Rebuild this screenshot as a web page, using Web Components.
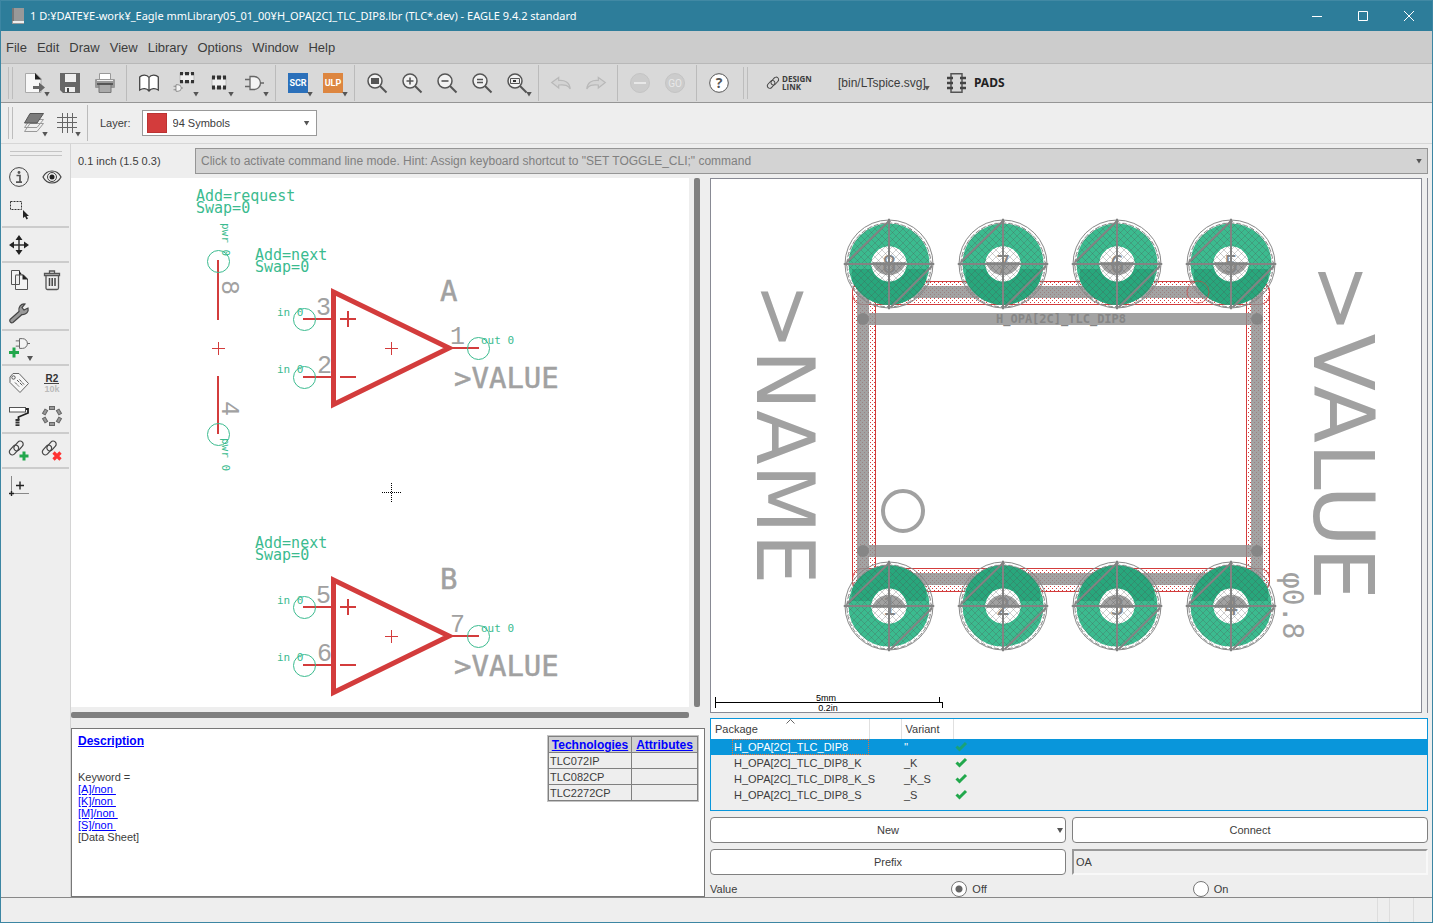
<!DOCTYPE html>
<html lang="en">
<head>
<meta charset="utf-8">
<meta name="viewport" content="width=device-width, initial-scale=1">
<title>EAGLE 9.4.2 standard</title>
<style>
html, body { margin: 0; height: 100%; }
body { background: #eee; color: #3c3c3c; font: 11px/16px "Liberation Sans", "Noto Sans CJK JP", sans-serif; }
</style>
</head>
<body>
<app-window></app-window>
<script>
const base = '*{box-sizing:border-box}button,input,select{font:inherit;color:inherit;margin:0}button{border:0;background:none;padding:0}';
const define = (name, css, html) => {
  const t = document.createElement('template');
  const build = typeof html === 'function';
  if (!build) t.innerHTML = `<style>${base}${css}</style>${html}`;
  customElements.define(name, class extends HTMLElement {
    constructor() { super(); this.attachShadow({ mode: 'open' }); if (!build) this.shadowRoot.append(t.content.cloneNode(true)); }
    connectedCallback() { if (build) this.shadowRoot.innerHTML = `<style>${base}${css}</style>${html(this)}`; }
  });
};

const lens = inner => `<path d="M13 13l6.500 6.500" stroke="#555" stroke-width="2"/><circle cx="8" cy="8" r="7" fill="#fff" fill-opacity=".65" stroke="#555" stroke-width="1.500"/>${inner}`;
const gate = `<path d="M6 3.500h4a6.500 6.500 0 0 1 0 13H6zM16.500 10H20M1 6.500h5M1 13.500h5" fill="#f4f4f4" stroke="#666" stroke-width="1.300"/>`;
const chip = `<rect x="3" y="4" width="14" height="11" fill="#eee" stroke="#bbb"/><path d="M3 4.500h3m2 0h4m2 0h3M3 14.500h3m2 0h4m2 0h3" stroke="#333" stroke-width="4"/>`;
const chain = `<g fill="none" stroke="#444" stroke-width="1.200"><rect x="-3" y="-5.500" width="6" height="11" rx="3" transform="translate(9.500 5) rotate(42)"/><rect x="-3" y="-5.500" width="6" height="11" rx="3" transform="translate(5 9) rotate(42)"/></g>`;
const tag = (t, c) => `<rect width="20" height="20" fill="${c}"/><text x="10" y="13" font-family="Roboto" font-weight="700" font-size="9" fill="#fff" text-anchor="middle">${t}</text>`;
const icons = {
  export: `<path d="M.500 .500H11l5 5V19.500H.500z" fill="#f8f8f8" stroke="#aaa"/><path d="M10 0l6.500 6.500H10z" fill="#222"/><path d="M8 13h6V9.500l6 5-6 5V16H8z" fill="#666"/>`,
  save: `<path d="M0 0h20v20H3l-3-3z" fill="#666"/><path d="M5 1h11v8H5zM5 14h10v5H5z" fill="#eee"/><path d="M7 15h2v4H7z" fill="#444"/>`,
  print: `<path d="M4.500 .500h11V7h-11z" fill="#fff" stroke="#999"/><rect y="6" width="20" height="9" rx="1" fill="#999"/><path d="M2 7.500h16" stroke="#eee"/><path d="M4 11h12v8.500H4z" fill="#aaa" stroke="#777"/><path d="M2 11h16" stroke="#444" stroke-width="1.500"/>`,
  book: `<path d="M10 4.500C8 1.500 3 1.500 .700 4v13c3-2 7-2 9.300 1 2.300-3 6.300-3 9.300-1V4C17 1.500 12 1.500 10 4.500zM10 4.500V18" fill="#fff" stroke="#444" stroke-width="1.300"/>`,
  device: `<g transform="translate(3 -3) scale(1 .800)">${chip}</g><g transform="translate(-1 10) scale(.500)">${gate}</g>`,
  chip, gate,
  scr: tag('SCR', '#2b70ba'), ulp: tag('ULP', '#dd8640'),
  zoomfit: lens('<path d="M4 5h8v6H4z" fill="#555"/>'),
  zoomin: lens('<path d="M4.500 8h7M8 4.500v7" stroke="#555" stroke-width="1.600"/>'),
  zoomout: lens('<path d="M4.500 8h7" stroke="#555" stroke-width="1.600"/>'),
  zoomredraw: lens('<path d="M5 6.500h6M5 9.500h6" stroke="#555" stroke-width="1.500"/>'),
  zoomselect: lens('<path d="M3.500 5.500h9v5h-9z" fill="#eee" stroke="#555"/><path d="M6 7h3v2H6z" fill="#333"/>'),
  undo: `<path d="M.700 9.500l7-5v3c6-.500 11 1.500 11.500 8.500-2-4-5-4.500-11.500-4v3z" fill="#d4d4d4" stroke="#b9b9b9" stroke-width="1.200"/>`,
  redo: `<path d="M19.300 9.500l-7-5v3C6.300 7 1.300 9 .800 16c2-4 5-4.500 11.500-4v3z" fill="#d4d4d4" stroke="#b9b9b9" stroke-width="1.200"/>`,
  stop: `<circle cx="10" cy="10" r="9.500" fill="#ccc" stroke="#c4c4c4"/><path d="M4 10h12" stroke="#e8e8e8" stroke-width="2"/>`,
  go: `<circle cx="10" cy="10" r="9.500" fill="#ccc" stroke="#c4c4c4"/><text x="10" y="14" font-family="Roboto" font-size="10" fill="#e8e8e8" text-anchor="middle">GO</text>`,
  help: `<circle cx="10" cy="10" r="9.300" fill="#fff" stroke="#555"/><text x="10" y="15" font-family="Open Sans" font-weight="700" font-size="14" fill="#555" text-anchor="middle">?</text>`,
  link: `<g transform="translate(-1 1) scale(.820)">${chain}</g>`,
  pads: `<path d="M4 .750h11v18.500H4z" fill="none" stroke="#555" stroke-width="1.500"/><path d="M0 5h6M0 10h6M0 15h6M13 5h6M13 10h6M13 15h6" stroke="#444" stroke-width="2.500"/>`,
  layers: `<path d="M6 10.500h13.500L13 18.500H.500zM6 6.500h13.500L13 14.500H.500z" fill="#eee" stroke="#999"/><path d="M6 .500h13.500L13 10H.500z" fill="#7b7b7b" stroke="#555"/>`,
  grid: `<path d="M5.500 0v20M10.500 0v20M15.500 0v20M0 4.500h20M0 9.500h20M0 14.500h20" stroke="#666"/>`,
  info: `<circle cx="10" cy="10" r="9.400" fill="none" stroke="#444"/><path d="M7.500 8.500h3.500V15M7 15.200h6" fill="none" stroke="#555" stroke-width="1.700"/><circle cx="10" cy="5.500" r="1.400" fill="#555"/>`,
  eye: `<path d="M1 10c4-8 14-8 18 0-4 8-14 8-18 0z" fill="none" stroke="#444" stroke-width="1.200"/><circle cx="10" cy="10" r="4.500" fill="none" stroke="#444"/><circle cx="10" cy="10" r="2.500" fill="#222"/>`,
  select: `<path d="M1.500 1.500h11v8h-11z" fill="none" stroke="#333" stroke-dasharray="2 1"/><path d="M14 10v8l2-1.500 1.500 3 1.500-1-1.500-2.500H20z" fill="#222"/>`,
  move: `<path d="M10 3v14M3 10h14" stroke="#333" stroke-width="1.500"/><path d="M10 0l3.500 5h-7zM10 20l3.500-5h-7zM0 10l5-3.500v7zM20 10l-5-3.500v7z" fill="#222"/>`,
  copy: `<path d="M2.500 .500h8v14h-8zM6.500 5.500v14h12V9l-4-4H6.500z" fill="#f4f4f4" stroke="#555"/><path d="M10 .500l3 4h-3zM13.500 4l5.500 5.500h-5.500z" fill="#222"/>`,
  trash: `<path d="M4 5.500h12.500V18a1.500 1.500 0 0 1-1.500 1.500H5.500A1.500 1.500 0 0 1 4 18zM2.500 3.500h15v2h-15zM7.500 3V1h5v2" fill="none" stroke="#555" stroke-width="1.300"/><path d="M7.500 8v8M10.200 8v8M13 8v8" stroke="#444" stroke-width="1.500"/>`,
  wrench: `<path d="M1 16.500L10 8.500C9 4 12 .500 16 1l-3 3.500 2 2.500 4-2c1 4-2 7-6 6.500L4 19.500c-2 1-4-1-3-3z" fill="#999" stroke="#444" stroke-width="1.200"/>`,
  add: `<g transform="translate(6 -2) scale(.750)">${gate}</g><path d="M5 9.500v10M0 14.500h10" stroke="#22a84c" stroke-width="3"/>`,
  name: `<path d="M1 4l3-3.500h6L19.500 10.500 11 19.500 1 9.500z" fill="#f6f6f6" stroke="#666"/><circle cx="4.500" cy="4.500" r="1.700" fill="none" stroke="#555"/><path d="M6 9.500l4 4M8 7l6 6M10.500 6.500l4.500 5" stroke="#555" stroke-dasharray="3 1"/>`,
  value: `<text x="10" y="9" font-family="Liberation Sans" font-weight="700" font-size="10" fill="#333" text-anchor="middle">R2</text><path d="M2 10.500h15" stroke="#444"/><text x="10" y="19" font-family="Liberation Sans" font-weight="700" font-size="9" fill="#bbb" text-anchor="middle">10k</text>`,
  paint: `<rect x=".500" y="1.500" width="16" height="4.500" fill="#fff" stroke="#555"/><path d="M17 3h2v4l-9.500 4v3" fill="none" stroke="#222" stroke-width="1.800"/><path d="M8.500 13v7" stroke="#333" stroke-width="4" stroke-dasharray="2 .600"/>`,
  ring: `<g fill="#999" stroke="#666">${[0, 60, 120, 180, 240, 300].map(a => `<rect x="7.500" y=".500" width="5" height="3" transform="rotate(${a} 10 10)"/>`).join('')}</g>`,
  connect: `${chain}<path d="M15 10.500v9M10.500 15h9" stroke="#22a84c" stroke-width="3"/>`,
  disconnect: `${chain}<path d="M11.500 11.500l7 7M18.500 11.500l-7 7" stroke="#f33" stroke-width="3.200"/>`,
  mark: `<path d="M2.500 0v17M2.500 17.500H20" stroke="#888"/><path d="M0 17.500h5M2.500 15v5M7 9.500h8M11 5.500v8" stroke="#222" stroke-width="1.400"/>`,
  check: `<path d="M1.500 5.500l3 3L11 2" fill="none" stroke="#22a84c" stroke-width="3"/>`
};

define('ui-icon', ':host{display:block;width:20px;height:20px}:host([name=check]){width:12px;height:12px}:host([name=link]){width:12px;height:14px}svg{display:block;width:100%;height:100%;overflow:visible}',
  el => { const n = el.getAttribute('name'); const vb = n === 'check' ? '0 0 12 12' : n === 'link' ? '0 0 12 14' : '0 0 20 20'; return `<svg viewBox="${vb}" aria-hidden="true">${icons[n]}</svg>`; });

define('drop-caret', ':host{display:block;width:6px;height:5px;background:#555;clip-path:polygon(0 0,100% 0,50% 100%)}', '');

define('tool-button', ':host{display:block;width:35px;height:33px}button{position:relative;display:grid;place-items:center;width:100%;height:100%}drop-caret{position:absolute;right:2px;bottom:3px}',
  el => `<button type="button" aria-label="${el.getAttribute('label')}" ${el.hasAttribute('disabled') ? 'disabled' : ''}><ui-icon name="${el.getAttribute('icon')}"></ui-icon>${el.hasAttribute('menu') ? '<drop-caret></drop-caret>' : ''}</button>`);
define('tool-sep', ':host{display:block;width:9px;height:36px;padding-left:4px}div{width:1px;height:100%;background:#bbb}', '<div></div>');
define('tool-grip', ':host{display:block;width:16px;height:32px;padding-left:7px}div{width:5px;height:100%;border:solid #bdbdbd;border-width:0 1px}', '<div></div>');

define('title-bar', `:host{display:flex;align-items:center;height:31px;background:#2d7d9a;border-top:1px solid #4189a4;color:#fff;font:11px/16px "Noto Sans","Noto Sans CJK JP",sans-serif;padding-left:11px}
svg{display:block}.name{flex:1;margin-left:6px;white-space:nowrap;overflow:hidden}button{width:46px;height:30px;display:grid;place-items:center}`,
`<svg width="12" height="16"><path d="M0 0h12v16H0z" fill="#999"/><path d="M0 0h2v13H0z" fill="#777"/><path d="M1 13h11v2H1z" fill="#eee"/></svg>
<div class="name">1 D:¥DATE¥E-work¥_Eagle mmLibrary05_01_00¥H_OPA[2C]_TLC_DIP8.lbr (TLC*.dev) - EAGLE 9.4.2 standard</div>
<button aria-label="Minimize"><svg width="10" height="10"><path d="M0 5.500h10" stroke="#fff"/></svg></button>
<button aria-label="Maximize"><svg width="10" height="10"><path d="M.500 .500h9v9h-9z" fill="none" stroke="#fff"/></svg></button>
<button aria-label="Close"><svg width="10" height="10"><path d="M0 0l10 10M10 0L0 10" stroke="#fff"/></svg></button>`);

define('menu-bar', ':host{display:flex;gap:10px;align-items:center;height:33px;padding:1px 0 0 5px;background:#ccc;border-bottom:1px solid #b8b8b8;font-size:13px}',
  ['File', 'Edit', 'Draw', 'View', 'Library', 'Options', 'Window', 'Help'].map(m => `<button type="button">${m}</button>`).join(''));

const tb = (icon, label, extra = '') => `<tool-button icon="${icon}" label="${label}" ${extra}></tool-button>`;
define('action-bar', `:host{display:flex;align-items:center;height:39px;background:#d9d9d9;border-bottom:1px solid #959595}
.wide{display:flex;align-items:center;height:33px;white-space:nowrap;font-size:12px;position:relative}.dl{margin-left:16px;gap:2px;width:56px;font:700 8px/8px "Open Sans",sans-serif;text-align:left}
.lt{margin-left:14px;width:92px}.lt drop-caret{position:absolute;right:0;bottom:9px}.pads{margin-left:17px;gap:7px;font:700 12px/16px "Noto Sans",sans-serif;color:#222}`,
`<tool-grip></tool-grip>${tb('export', 'Export', 'menu')}${tb('save', 'Save')}${tb('print', 'Print')}<tool-sep></tool-sep>
${tb('book', 'Table of contents')}${tb('device', 'Device', 'menu')}${tb('chip', 'Footprint', 'menu')}${tb('gate', 'Symbol', 'menu')}<tool-sep></tool-sep>
${tb('scr', 'Script', 'menu')}${tb('ulp', 'Run ULP', 'menu')}<tool-sep></tool-sep>
${tb('zoomfit', 'Fit')}${tb('zoomin', 'Zoom in')}${tb('zoomout', 'Zoom out')}${tb('zoomredraw', 'Redraw')}${tb('zoomselect', 'Zoom select', 'menu')}<tool-sep></tool-sep>
${tb('undo', 'Undo', 'disabled')}${tb('redo', 'Redo', 'disabled')}<tool-sep></tool-sep>${tb('stop', 'Stop', 'disabled')}${tb('go', 'Go', 'disabled')}<tool-sep></tool-sep>${tb('help', 'Help')}
<tool-grip></tool-grip><button class="wide dl"><ui-icon name="link"></ui-icon><span>DESIGN<br>LINK</span></button>
<button class="wide lt">[bin/LTspice.svg]<drop-caret></drop-caret></button><button class="wide pads"><ui-icon name="pads"></ui-icon>PADS</button>`);

define('layer-bar', `:host{display:flex;align-items:center;height:41px;border-bottom:1px solid #d6d6d6}tool-button{width:33px}label{margin:0 11px 0 8px}
.pick{display:grid;grid-template-columns:4px 20px 1fr 12px;align-items:center;width:175px;height:26px;border:1px solid #999;background:#fff}.sw{grid-area:1/2;height:20px;background:#d33c3c;border:1px solid #b33}
select{grid-area:1/3/2/5;appearance:none;border:0;background:none;padding:0 0 0 6px;height:24px}drop-caret{grid-area:1/4;pointer-events:none}`,
`<tool-grip></tool-grip>${tb('layers', 'Layer settings', 'menu')}${tb('grid', 'Grid', 'menu')}<tool-sep></tool-sep><label for="layer">Layer:</label>
<div class="pick"><span class="sw"></span><select id="layer"><option>94 Symbols</option></select><drop-caret></drop-caret></div>`);

const none = '<span></span>';
define('side-palette', `:host{display:block;width:70px;border-right:1px solid #d4d4d4;padding:7px 1px 0 1px}.grip{height:5px;margin:0 7px 4px 8px;border:solid #c4c4c4;border-width:1px 0}
.group{display:grid;grid-template-columns:33px 33px;border-bottom:2px solid #ccc}.group:last-child{border:0}tool-button{width:33px}`,
`<div class="grip"></div><div class="group">${tb('info', 'Info')}${tb('eye', 'Show')}${tb('select', 'Group')}${none}</div>
<div class="group">${tb('move', 'Move')}</div><div class="group">${tb('copy', 'Copy')}${tb('trash', 'Delete')}${tb('wrench', 'Change')}</div>
<div class="group">${tb('add', 'Add', 'menu')}</div><div class="group">${tb('name', 'Name')}${tb('value', 'Value')}${tb('paint', 'Paint')}${tb('ring', 'Pin array')}</div>
<div class="group">${tb('connect', 'Connect')}${tb('disconnect', 'Disconnect')}</div><div class="group">${tb('mark', 'Mark')}</div>`);

define('command-row', `:host{display:grid;grid-template-columns:117px 1fr;align-items:center;height:34px;padding:0 4px 0 7px}
.box{display:flex;align-items:center;height:26px;border:1px solid #959595;background:#d3d3d3;padding:0 5px}input{flex:1;min-width:0;border:0;padding:0;background:none;font-size:12px;outline:0}input::placeholder{color:#808080;opacity:1}`,
`<span>0.1 inch (1.5 0.3)</span><div class="box"><input aria-label="Command line" placeholder="Click to activate command line mode. Hint: Assign keyboard shortcut to &quot;SET TOGGLE_CLI;&quot; command"><drop-caret></drop-caret></div>`);

const opamp = (dy, letter, plus, minus, out) => `<g transform="translate(0 ${dy})">
<g class="note"><text x="255" y="260">Add=next</text><text x="255" y="272">Swap=0</text></g>
<g class="pin"><text x="277" y="316">in 0</text><text x="277" y="373">in 0</text><text x="481" y="344">out 0</text></g>
<g class="num"><text x="316" y="315">${plus}</text><text x="317" y="373">${minus}</text><text x="450" y="344">${out}</text></g>
<g class="val"><text x="440" y="301">${letter}</text><text x="454" y="388">&gt;VALUE</text></g>
<path class="wire" d="M303 319h28M303 377h28M450 348h29M340 319h16M348 311v16M340 377h16"/>
<path d="M333.500 292L449 348 333.500 404.500z" fill="none" stroke="#d33c3c" stroke-width="5"/>
<path class="thin" d="M385 348.500h13M391.500 342v13"/>
<g class="ring"><circle cx="304.500" cy="319.500" r="11"/><circle cx="304.500" cy="377.500" r="11"/><circle cx="478.500" cy="348.500" r="11"/></g></g>`;
define('symbol-view', `:host{display:grid;grid-template:minmax(0,1fr) 21px/minmax(0,1fr) 16px;min-height:0}svg{display:block;width:100%;height:100%;background:#fff}
text{font-family:"DejaVu Sans Mono",monospace}.note text{font-size:15px;fill:#3bbb8f}.pin text{font-size:11px;fill:#3bbb8f}.num text{font:25px "Liberation Mono",monospace;fill:#a1a1a1}.val text{font-size:29px;fill:#a1a1a1;stroke:#a1a1a1;stroke-width:.5px}
.wire{stroke:#d33c3c;stroke-width:2}.thin{stroke:#d33c3c}.ring circle{fill:none;stroke:#3bbb8f}.v{width:6px;margin-left:5px;background:#808080;border-radius:2px}.h{height:6px;margin-top:5px;background:#808080;border-radius:2px}`,
`<svg viewBox="71 178 618 529" role="img" aria-label="Device symbols">
<g class="note"><text x="196" y="201">Add=request</text><text x="196" y="213">Swap=0</text></g>
<g class="pin"><text transform="translate(222 223) rotate(90)">pwr 0</text><text transform="translate(222 438) rotate(90)">pwr 0</text></g>
<g class="num"><text transform="translate(222 280) rotate(90)">8</text><text transform="translate(222 401) rotate(90)">4</text></g>
<path class="wire" d="M218 260v60M218 376v58"/><path class="thin" d="M212 348.500h13M218.500 342v13"/>
<g class="ring"><circle cx="218.500" cy="261.500" r="11"/><circle cx="218.500" cy="434.500" r="11"/></g>
${opamp(0, 'A', 3, 2, 1)}${opamp(288, 'B', 5, 6, 7)}
<path d="M382 492.500h19M391.500 483v19" stroke="#000" stroke-dasharray="1 1"/></svg>
<div class="v"></div><div class="h"></div>`);

define('description-panel', `:host{display:flex;justify-content:space-between;height:169px;background:#fff;border:1px solid #777;padding:6px 6px 0;line-height:12px}
a{color:#00f}.t,th{font-weight:700;font-size:12px;line-height:13px}.text{white-space:pre}.lines{margin-top:23px}
table{border-collapse:collapse;table-layout:fixed;width:150px;align-self:flex-start;margin-top:1px;outline:1px solid #c4c4c4;background:#eee}th,td{border:1px solid #808080;height:16px;padding:0 1px;text-align:left;line-height:14px}th{background:#d0d0d0;text-align:center;padding:0}`,
`<div class="text"><a class="t" href="#description">Description</a><div class="lines">Keyword =
<a href="#a">[A]/non </a>
<a href="#k">[K]/non </a>
<a href="#m">[M]/non </a>
<a href="#s">[S]/non </a>
[Data Sheet]</div></div>
<table><colgroup><col style="width:83px"><col></colgroup><tr><th><a href="#tech">Technologies</a></th><th><a href="#attr">Attributes</a></th></tr><tr><td>TLC072IP</td><td></td></tr><tr><td>TLC082CP</td><td></td></tr><tr><td>TLC2272CP</td><td></td></tr></table>`);

const pad = (x, y, n, up) => `<g transform="translate(${x} ${y})"><circle r="29" fill="none" stroke="#3bbb8f" stroke-width="23"/>
<path d="${up ? 'M-37 5H37V17A40.500 40.500 0 0 1-37 17z' : 'M-37-5H37V-17A40.500 40.500 0 0 0-37-17z'}" fill="#28a77c"/><circle r="17.500" fill="#fff"/>
<path d="${up ? 'M-17-2H17A17.500 17.500 0 0 1-17-2z' : 'M-17 2H17A17.500 17.500 0 0 0-17 2z'}" fill="#a1a1a1"/>
<circle r="42" fill="url(#hatch)"/><circle r="44" fill="none" stroke="#888"/><circle r="42" cy="1" fill="none" stroke="#888" stroke-dasharray="5 2"/>
<path d="M-45 0H45M0-45V45M-42-2L0-43M43 2L2 43" stroke="#838383" stroke-width="2"/><path d="M0-46l2 4h-4zM-46 0l4-2v4zM46 0l-4-2v4zM0 46l2-4h-4z" fill="#838383"/>
<text x="-7" y="9" font-size="24" fill="#858585">${n}</text></g>`;
const strips = f => `<g ${f}><rect x="852.500" y="281.500" width="23" height="310" rx="10"/><rect x="1246.500" y="281.500" width="23" height="310" rx="10"/><rect x="852.500" y="281.500" width="417" height="23" rx="10"/><rect x="852.500" y="568.500" width="417" height="23" rx="10"/></g>`;
define('package-view', `:host{display:grid;grid-template:minmax(0,1fr)/minmax(0,1fr);padding-right:5px;border-right:1px solid #888a94;min-height:0}svg{display:block;width:100%;height:100%;background:#fff;border:1px solid #888a94}
text{font-family:"DejaVu Sans Mono",monospace}.big{font:80px "DejaVu Sans",sans-serif;fill:#a1a1a1}.big.value{font-size:84px}.scale{font:9px "Liberation Sans",sans-serif;text-anchor:middle}`,
`<svg viewBox="711 179 710 533" role="img" aria-label="Package footprint"><defs>
<pattern id="hatch" width="7" height="7" patternUnits="userSpaceOnUse"><path d="M-1-1l9 9M8-1L-1 8" stroke="#505050" stroke-opacity=".35" stroke-width=".800"/></pattern>
<pattern id="dots" width="4" height="4" patternUnits="userSpaceOnUse"><path d="M0 .500h1M2 2.500h1" stroke="#d33c3c"/></pattern></defs>
${strips('fill="url(#dots)"')}${strips('fill="none" stroke="#d33c3c"')}
<g stroke="#8f8f8f" stroke-width="12" opacity=".820"><path d="M863 292V579M1257 292V579M863 292H1257M863 579H1257" stroke-linecap="round"/><path d="M857 319H1263M857 551H1263"/></g>
<g fill="#868686"><circle cx="863" cy="319" r="6"/><circle cx="1257" cy="319" r="6"/><circle cx="863" cy="551" r="6"/><circle cx="1257" cy="551" r="6"/></g>
<circle cx="903" cy="511" r="20" fill="none" stroke="#a1a1a1" stroke-width="4"/>
<text x="996" y="323" font-size="12" font-weight="700" fill="#868686">H_OPA[2C]_TLC_DIP8</text>
${[8, 7, 6, 5].map((n, i) => pad(889 + i * 114, 264, n, true)).join('')}${[1, 2, 3, 4].map((n, i) => pad(889 + i * 114, 606, n, false)).join('')}
<circle cx="1198" cy="292" r="11" fill="none" stroke="#d33c3c" stroke-opacity=".6"/>
<text class="big" transform="translate(757 283) rotate(90)">&gt;NAME</text><text class="big value" transform="translate(1314 263) rotate(90)">&gt;VALUE</text>
<text transform="translate(1283 572) rotate(90)" font-size="28" fill="#a1a1a1">φ0.8</text>
<path d="M715 702.500H942M715.500 697v11M939.500 697v5M942.500 702v6" stroke="#000"/><text class="scale" x="826" y="701">5mm</text><text class="scale" x="828" y="711">0.2in</text></svg>`);

const row = (p, v, sel) => `<tr${sel ? ' class="sel"' : ''}><td class="p"><span>${p}</span></td><td></td><td class="vr">${v}</td><td class="c"><ui-icon name="check"></ui-icon></td></tr>`;
define('variant-list', `:host{display:block;position:relative;height:93px;border:1px solid #0996db;overflow:hidden}table{border-collapse:collapse;table-layout:fixed;width:100%}
th{height:20px;background:#fff;font-weight:400;text-align:left;padding:0 4px;border-right:1px solid #e0e0e0}th:last-child{border:0}td{height:16px;padding:0;line-height:14px}.p{padding-left:21px}.p span{display:block;height:16px;padding:0 0 0 1px;line-height:14px;border:1px solid transparent}.vr{padding-left:3px}.c{padding-left:2px}
.sel{background:#0996db;color:#fff}.sel .p span{border:1px dotted #f07030}.sel ui-icon{opacity:.7}svg{position:absolute;left:75px;top:0}`,
`<table><colgroup><col style="width:158px"><col style="width:32px"><col style="width:52px"><col></colgroup><tr><th>Package</th><th></th><th>Variant</th><th></th></tr>
${row('H_OPA[2C]_TLC_DIP8', "''", true)}${row('H_OPA[2C]_TLC_DIP8_K', '_K')}${row('H_OPA[2C]_TLC_DIP8_K_S', '_K_S')}${row('H_OPA[2C]_TLC_DIP8_S', '_S')}</table><svg width="9" height="5"><path d="M.500 4.500l4-4 4 4" fill="none" stroke="#666"/></svg>`);

define('device-controls', `:host{display:grid;gap:6px}.two{display:grid;grid-template-columns:1fr 1fr;gap:6px}.two button{position:relative;height:26px;background:#fff;border:1px solid #808080;border-radius:4px;text-align:center}
drop-caret{position:absolute;right:2px;top:10px}input[type=text]{height:26px;width:100%;min-width:0;padding:0 2px;background:#eee;border:2px solid #999;border-color:#999 #f8f8f8 #f8f8f8 #999;border-radius:0}
.three{display:grid;grid-template-columns:1fr 1fr 1fr;gap:6px;height:16px;align-items:center}label{display:flex;gap:5px;align-items:center}
input[type=radio]{appearance:none;width:16px;height:16px;border:1px solid #777;border-radius:50%;background:#fff}input:checked{background:radial-gradient(circle,#666 0 3px,#fff 4px)}`,
`<div class="two"><button type="button">New<drop-caret></drop-caret></button><button type="button">Connect</button></div>
<div class="two"><button type="button">Prefix</button><input type="text" aria-label="Prefix" value="OA" readonly></div>
<div class="three" role="radiogroup" aria-label="Value"><span>Value</span><label><input type="radio" name="v" checked>Off</label><label><input type="radio" name="v">On</label></div>`);

define('status-bar', ':host{display:flex;justify-content:flex-end;gap:11px;height:26px;padding-right:18px;border-top:1px solid #888;border-bottom:1px solid #3c86a3}i{width:1px;background:#ddd}i:last-child{margin-left:12px}', '<i></i><i></i><i></i>');

define('app-window', `:host{display:grid;grid-template-rows:auto auto auto auto minmax(0,1fr) auto;height:100vh;border:solid #3c86a3;border-width:0 1px}
main{display:grid;grid-template-columns:70px minmax(0,1fr);min-height:0}.work{display:grid;grid-template-rows:auto minmax(0,1fr);min-height:0}
.panes{display:grid;grid-template-columns:minmax(0,634fr) minmax(0,718fr);gap:5px;padding-right:4px;min-height:0}.left,.right{display:grid;min-height:0}.left{grid-template-rows:minmax(0,1fr) auto}.right{grid-template-rows:minmax(0,1fr) auto auto}variant-list{margin:5px 0 6px}`,
`<title-bar></title-bar><menu-bar></menu-bar><action-bar></action-bar><layer-bar></layer-bar>
<main><side-palette></side-palette><div class="work"><command-row></command-row><div class="panes"><div class="left"><symbol-view></symbol-view><description-panel></description-panel></div>
<div class="right"><package-view></package-view><variant-list></variant-list><device-controls></device-controls></div></div></div></main><status-bar></status-bar>`);
</script>
</body>
</html>
